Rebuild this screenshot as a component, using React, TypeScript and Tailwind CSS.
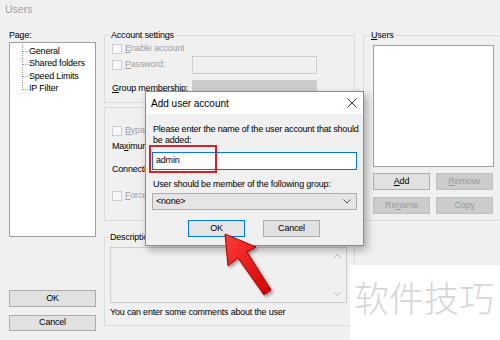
import type { ReactNode } from 'react'

const ui = "font-['Liberation_Sans',Arial,sans-serif]"

function U({ children }: { children: ReactNode }) {
  return <span className="underline underline-offset-1">{children}</span>
}

function Check({ children }: { children: ReactNode }) {
  return (
    <div className="flex h-[13px] items-center gap-[3px] whitespace-nowrap text-[#a0a0a0]">
      <span className="h-[10px] w-[10px] shrink-0 border border-[#cccccc] bg-[#f7f7f7]" />
      <span>{children}</span>
    </div>
  )
}

function WinButton({ children, disabled, className = '' }: { children: ReactNode; disabled?: boolean; className?: string }) {
  return (
    <div
      className={`flex items-center justify-center border ${
        disabled ? 'border-[#bfbfbf] bg-[#cccccc] text-[#9a9a9a]' : 'border-[#adadad] bg-[#e1e1e1] text-black'
      } ${className}`}
    >
      {children}
    </div>
  )
}

function TreeItem({ label, last }: { label: string; last?: boolean }) {
  return (
    <div className="relative flex h-[12.5px] items-center pl-[19px] whitespace-nowrap">
      {/* dotted connector */}
      <span className={`absolute left-[12px] top-0 w-0 border-l border-dotted border-[#a0a0a0] ${last ? 'h-[7px]' : 'h-[13px]'}`} />
      <span className="absolute left-[12px] top-[6px] h-0 w-[6px] border-t border-dotted border-[#a0a0a0]" />
      <span>{label}</span>
    </div>
  )
}

function Chevron({ up }: { up?: boolean }) {
  return (
    <svg width="7" height="4" viewBox="0 0 7 4">
      <path d={up ? 'M0.5 3.5 L3.5 0.5 L6.5 3.5' : 'M0.5 0.5 L3.5 3.5 L6.5 0.5'} stroke="#b5b5b5" fill="none" />
    </svg>
  )
}

export default function App() {
  return (
    <div className={`relative h-[340px] w-[500px] overflow-hidden bg-[#f0f0f0] text-[9px] tracking-[-0.2px] text-black ${ui}`}>
      {/* Window title */}
      <div className="h-[28px] pl-[5px] pt-[3px] text-[10.5px] leading-[12px] tracking-normal text-[#a0a0a0]">Users</div>

      <div className="flex gap-[8px] pl-[9px]">
        {/* Left: page tree + buttons */}
        <div className="flex w-[87px] flex-col">
          <div className="h-[14px] leading-[14px]">Page:</div>
          <div className="h-[195px] border border-[#a0a0a0] bg-white pt-[2px]">
            <TreeItem label="General" />
            <TreeItem label="Shared folders" />
            <TreeItem label="Speed Limits" />
            <TreeItem label="IP Filter" last />
          </div>
          <WinButton className="mt-[53px] h-[17px]">OK</WinButton>
          <WinButton className="mt-[8px] h-[16px]">Cancel</WinButton>
        </div>

        {/* Middle: account settings */}
        <div className="flex w-[251px] flex-col">
          <fieldset className="h-[75px] border border-[#dcdcdc] px-[7px]">
            <legend className="ml-[-2px] px-[1px] leading-[14px]">Account settings</legend>
            <Check>
              <U>E</U>nable account
            </Check>
            <div className="mt-[1px] flex h-[18px] items-center">
              <div className="w-[80px]">
                <Check>
                  <U>P</U>assword:
                </Check>
              </div>
              <div className="h-[18px] w-[125px] border border-[#cccccc] bg-[#f0f0f0]" />
            </div>
            <div className="mt-[6px] flex h-[18px] items-center">
              <span className="w-[80px] whitespace-nowrap">
                <U>G</U>roup membership:
              </span>
              <div className="h-[18px] w-[125px] border border-[#cccccc] bg-[#cccccc]" />
            </div>
          </fieldset>

          {/* speed / limits group: mostly covered by the dialog */}
          <fieldset className="mt-[4px] h-[114px] border border-[#dcdcdc] px-[7px] pt-[16px]">
            <div className="w-[33px] overflow-hidden whitespace-nowrap">
              <Check>
                <U>B</U>ypass
              </Check>
              <div className="mt-[3px] h-[13px] leading-[13px]">
                Ma<U>x</U>imum
              </div>
              <div className="mt-[10px] h-[13px] leading-[13px]">Connection</div>
              <div className="mt-[13px]">
                <Check>
                  <U>F</U>orce
                </Check>
              </div>
            </div>
          </fieldset>

          <fieldset className="mt-[9px] h-[96px] border border-[#dcdcdc] px-[5px]">
            <legend className="ml-[-1px] px-[1px] leading-[14px]">Description</legend>
            <div className="mt-[3px] flex h-[56px] w-[237px] flex-col items-end justify-between border border-[#cccccc] bg-[#f0f0f0] px-[5px] py-[6px]">
              <Chevron up />
              <Chevron />
            </div>
            <div className="mt-[3px] leading-[13px]">You can enter some comments about the user</div>
          </fieldset>
        </div>

        {/* Right: users */}
        <div className="flex w-[135px] flex-col">
          <fieldset className="h-[193px] border border-[#dcdcdc] px-[9px]">
            <legend className="ml-[-3px] px-[1px] leading-[14px]">
              <U>U</U>sers
            </legend>
            <div className="mt-[3px] h-[122px] w-[121px] border border-[#a0a0a0] bg-white" />
            <div className="mt-[6px] flex gap-[6px]">
              <WinButton className="h-[17px] w-[57px]">
                <U>A</U>dd
              </WinButton>
              <WinButton disabled className="h-[17px] w-[57px]">
                <U>R</U>emove
              </WinButton>
            </div>
            <div className="mt-[7px] flex gap-[6px]">
              <WinButton disabled className="h-[17px] w-[57px]">
                Re<U>n</U>ame
              </WinButton>
              <WinButton disabled className="h-[17px] w-[57px]">
                Cop<U>y</U>
              </WinButton>
            </div>
          </fieldset>
        </div>
      </div>

      {/* Add user account dialog */}
      <div className="absolute left-[145px] top-[91px] h-[155px] w-[219px] border border-[#8c8c8c] bg-[#f0f0f0] shadow-[3px_4px_8px_rgba(0,0,0,0.3)]">
        <div className="flex h-[22px] items-center justify-between bg-white pl-[5px] pr-[6px] text-[10px] tracking-normal">
          <span>Add user account</span>
          <svg width="10" height="10" viewBox="0 0 10 10">
            <path d="M0.5 0.5 L9.5 9.5 M9.5 0.5 L0.5 9.5" stroke="#333" strokeWidth="1" />
          </svg>
        </div>
        <div className="px-[6px] pt-[10px]">
          <div className="pl-[1px] leading-[11px]">
            <div className="whitespace-nowrap">Please enter the name of the user account that should</div>
            <div>be added:</div>
          </div>
          <div className="mt-[6px] flex h-[18px] items-center border border-[#0078d7] bg-white pl-[3px]">admin</div>
          <div className="mt-[8px] pl-[1px] leading-[12px]">User should be member of the following group:</div>
          <div className="mt-[3px] flex h-[17px] items-center justify-between border border-[#adadad] bg-[#e5e5e5] pl-[3px] pr-[5px]">
            <span>&lt;none&gt;</span>
            <svg width="8" height="5" viewBox="0 0 8 5">
              <path d="M0.5 0.5 L4 4 L7.5 0.5" stroke="#555" fill="none" />
            </svg>
          </div>
          <div className="mt-[10px] flex gap-[18px] pl-[36px]">
            <div className="flex h-[17px] w-[57px] items-center justify-center border border-[#0078d7] bg-[#e5e5e5]">OK</div>
            <div className="flex h-[17px] w-[57px] items-center justify-center border border-[#adadad] bg-[#e1e1e1]">Cancel</div>
          </div>
        </div>
      </div>

      {/* red highlight around the name */}
      <div className="absolute left-[149px] top-[145px] h-[28px] w-[68px] border-2 border-[#d42129]" />

      {/* red arrow pointing to OK */}
      <svg className="absolute left-0 top-0" width="500" height="340" viewBox="0 0 500 340">
        <defs>
          <linearGradient id="ar" x1="0" y1="0" x2="1" y2="1">
            <stop offset="0" stopColor="#ff3b3b" />
            <stop offset="1" stopColor="#d40000" />
          </linearGradient>
          <filter id="sh" x="-20%" y="-20%" width="150%" height="150%">
            <feDropShadow dx="2" dy="2" stdDeviation="1.5" floodColor="#000" floodOpacity="0.35" />
          </filter>
        </defs>
        <polygon
          points="225,234 228,266 238,258 264,295 271,290 247,252 256,247"
          fill="url(#ar)"
          stroke="#a30000"
          strokeWidth="1"
          strokeLinejoin="round"
          filter="url(#sh)"
        />
      </svg>

      {/* watermark */}
      <div className="absolute left-[350px] top-[265px] flex h-[75px] w-[150px] items-start bg-white pl-[4px] pt-[12px]">
        <span className="text-[35px] font-light leading-[40px] tracking-[0px] text-[#d6d6d6] font-['Noto_Sans_CJK_SC',sans-serif]">
          软件技巧
        </span>
      </div>
    </div>
  )
}
